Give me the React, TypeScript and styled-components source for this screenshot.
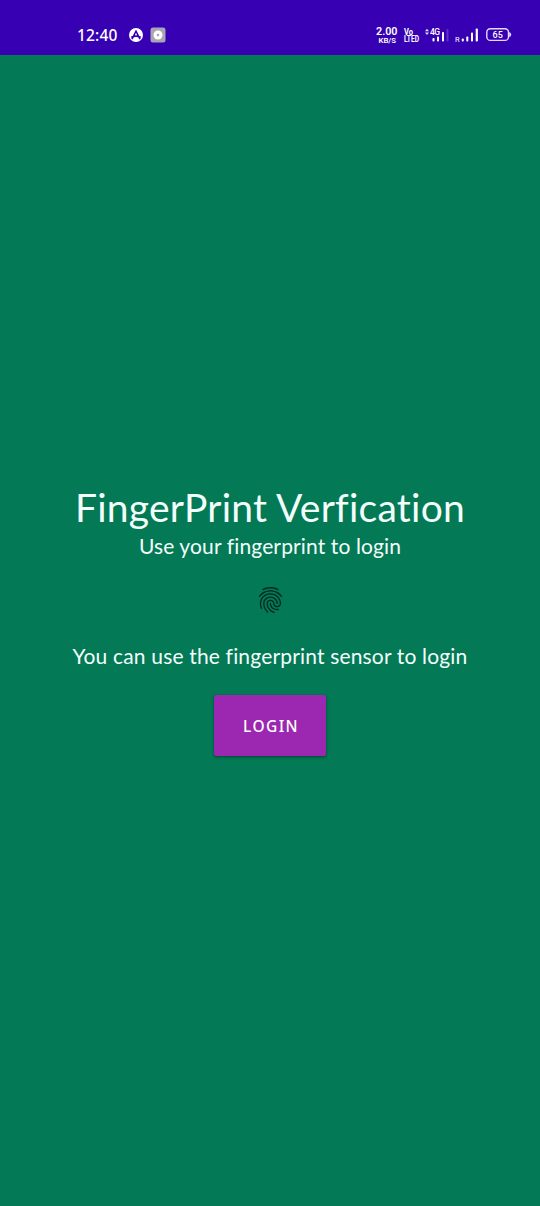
import React from "react";
import styled, { createGlobalStyle } from "styled-components";
import { MdFingerprint } from "react-icons/md";

const GlobalStyle = createGlobalStyle`
  body { margin: 0; background: #037956; }
`;

const Screen = styled.div`
  display: flex;
  flex-direction: column;
  height: 1206px;
  background: #037956;
  color: #f3fffb;
  font-family: Lato, "Noto Sans", sans-serif;
  overflow: hidden;
`;

const StatusBar = styled.header`
  display: flex;
  align-items: center;
  flex: none;
  box-sizing: border-box;
  height: 55px;
  padding: 14px 29px 0 77px;
  background: #3700b3;
  color: #fff;
`;

const Clock = styled.time`
  width: 52px;
  font: 500 15.5px/20px "Noto Sans", sans-serif;
  letter-spacing: 0.15px;
  white-space: nowrap;
`;

const Notifications = styled.div`
  display: flex;
  align-items: center;
  gap: 7px;
  margin-right: auto;
`;

const StatusItem = styled.div<{ $width: number; $gap?: number }>`
  display: flex;
  width: ${(p) => p.$width}px;
  height: 16px;
  margin-right: ${(p) => p.$gap ?? 0}px;
`;

const StatusSvg = styled.svg`
  display: block;
  overflow: visible;
  font-family: Roboto, sans-serif;
`;

const Content = styled.main`
  display: flex;
  flex: 1;
  flex-direction: column;
  align-items: center;
  padding-top: 427px;
`;

const Title = styled.h1`
  margin: 0;
  font-size: 39px;
  font-weight: 400;
  line-height: 50px;
  letter-spacing: 0.25px;
  white-space: nowrap;
`;

const Copy = styled.p<{ $spacing: number }>`
  margin: 0;
  font-size: 21px;
  line-height: 28px;
  letter-spacing: ${(p) => p.$spacing}px;
  white-space: nowrap;
`;

const PrintIcon = styled(MdFingerprint)`
  width: 31px;
  height: 32px;
  margin: 24px 0 26px;
  color: #03291e;
`;

const LoginButton = styled.button`
  width: 112px;
  height: 61px;
  margin-top: 24.5px;
  padding: 1px 0 0 2px;
  border: 0;
  border-radius: 2px;
  background: #9c27b0;
  color: #fff;
  font: 500 15.5px/20px "Noto Sans", sans-serif;
  letter-spacing: 1.4px;
  box-shadow: 0 1px 3px rgba(0, 0, 0, 0.45);
`;

const AppBadge = () => (
  <svg width="14" height="14" viewBox="0 0 14 14">
    <circle cx="7" cy="7" r="7" fill="#fff" />
    <path d="M3 11.2 7 3.2l4 8M2.2 9.4Q7 6.8 11.8 9.4" fill="none" stroke="#3700b3" strokeWidth="1.6" />
  </svg>
);

const SettingsBadge = () => (
  <svg width="16" height="16" viewBox="0 0 16 16">
    <rect x=".5" y=".5" width="15" height="15" rx="2.5" fill="#aaa5b5" />
    <circle cx="8" cy="8" r="4.5" fill="#fff" />
    <circle cx="8" cy="8" r="1.3" fill="#aaa5b5" />
  </svg>
);

const NetworkSpeed = () => (
  <StatusItem $width={22} $gap={6}>
    <StatusSvg width="22" height="16" fill="#fff" fontWeight="600">
      <text x="0" y="8" fontSize="10.5" textLength="21.5" lengthAdjust="spacingAndGlyphs">2.00</text>
      <text x="2.5" y="15.5" fontSize="8" textLength="17.5" lengthAdjust="spacingAndGlyphs">KB/S</text>
    </StatusSvg>
  </StatusItem>
);

const VoLte = () => (
  <StatusItem $width={15} $gap={6}>
    <StatusSvg width="15" height="16" fill="#fff" fontWeight="700">
      <text x="0" y="7.5" fontSize="8.5" textLength="9" lengthAdjust="spacingAndGlyphs">Vo</text>
      <text x="0" y="14.5" fontSize="8.5" textLength="15" lengthAdjust="spacingAndGlyphs">LTED</text>
    </StatusSvg>
  </StatusItem>
);

const MobileSignal = () => (
  <StatusItem $width={24} $gap={6}>
    <StatusSvg width="24" height="16" fill="#fff">
      <path d="M0 4.2 2 1.7 4 4.2ZM0 5.6 2 8.1 4 5.6Z" opacity=".85" />
      <text x="5" y="8" fontSize="8.5" fontWeight="500" textLength="10">4G</text>
      <rect x="7.5" y="11" width="2" height="3.5" rx=".8" />
      <rect x="12" y="9.5" width="2" height="5" rx=".8" />
      <rect x="17" y="5" width="2" height="9.5" rx=".8" />
      <rect x="21.5" y="2" width="2" height="12.5" rx=".8" opacity=".2" />
    </StatusSvg>
  </StatusItem>
);

const RoamingSignal = () => (
  <StatusItem $width={25} $gap={6}>
    <StatusSvg width="25" height="16" fill="#fff">
      <text x="0" y="14.5" fontSize="7.5">R</text>
      <rect x="6.8" y="11.5" width="2" height="3" rx=".8" />
      <rect x="11.3" y="9.5" width="2" height="5" rx=".8" />
      <rect x="16" y="5.5" width="2" height="9" rx=".8" />
      <rect x="20.7" y="1.5" width="2.2" height="13" rx=".8" />
    </StatusSvg>
  </StatusItem>
);

const Battery = () => (
  <StatusItem $width={25}>
    <StatusSvg width="25" height="16" fill="none">
      <rect x=".8" y="1.8" width="21.7" height="11.6" rx="3.5" stroke="#e4daff" strokeWidth="1.4" />
      <path d="M23.2 5q2 .6 2 2.6t-2 2.6Z" fill="#e4daff" />
      <text x="11.7" y="10.8" textAnchor="middle" fontSize="9" fontWeight="500" fill="#fff">65</text>
    </StatusSvg>
  </StatusItem>
);

export default function App() {
  return (
    <Screen>
      <GlobalStyle />
      <StatusBar>
        <Clock>12:40</Clock>
        <Notifications>
          <AppBadge />
          <SettingsBadge />
        </Notifications>
        <NetworkSpeed />
        <VoLte />
        <MobileSignal />
        <RoamingSignal />
        <Battery />
      </StatusBar>
      <Content>
        <Title>FingerPrint Verfication</Title>
        <Copy $spacing={0.13}>Use your fingerprint to login</Copy>
        <PrintIcon />
        <Copy $spacing={0.17}>You can use the fingerprint sensor to login</Copy>
        <LoginButton>LOGIN</LoginButton>
      </Content>
    </Screen>
  );
}
